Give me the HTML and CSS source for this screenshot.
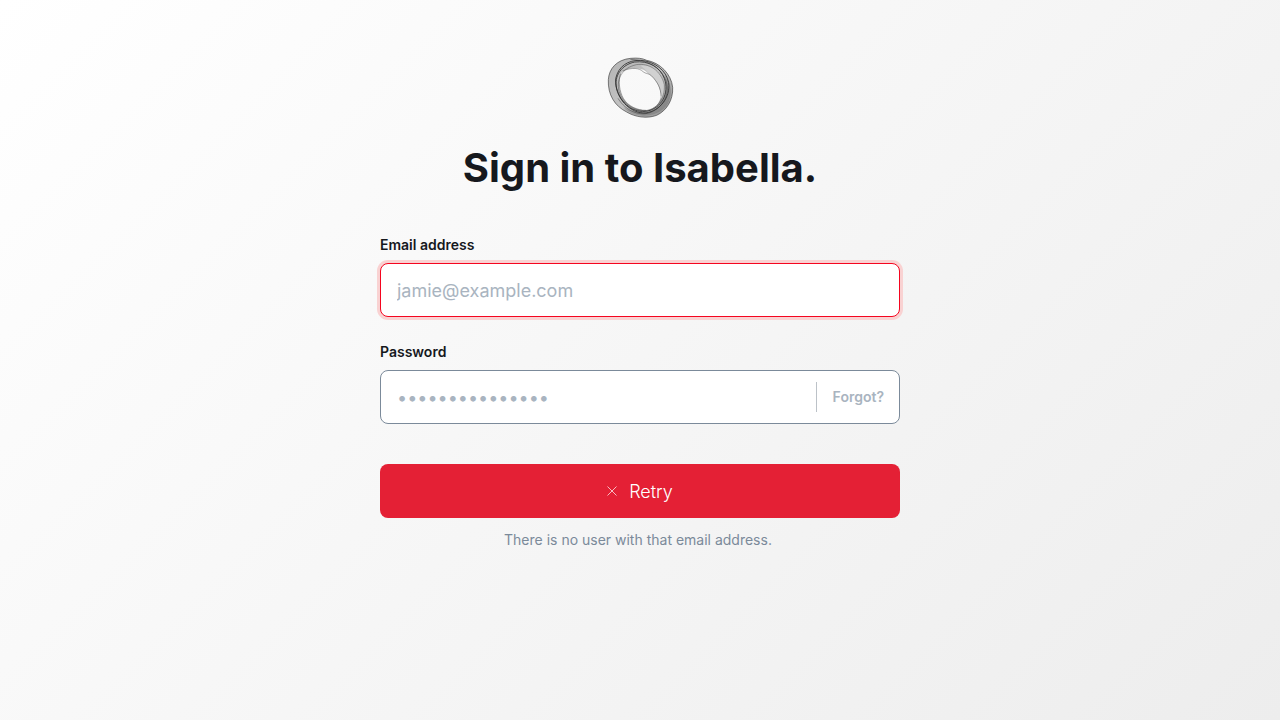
FILE: index.html
```html
<!DOCTYPE html>
<html lang="en">
<head>
<meta charset="utf-8">
<meta name="viewport" content="width=device-width, initial-scale=1">
<title>Sign in to Isabella.</title>
<link rel="stylesheet" href="styles.css">
</head>
<body>
<main class="signin">
  <svg class="logo" viewBox="0 0 240 240" aria-hidden="true">
    <defs>
      <linearGradient id="ring" x1="0" y1="0" x2="1" y2="1">
        <stop offset="0" stop-color="#b4b4b4"/>
        <stop offset="0.5" stop-color="#c2c2c2"/>
        <stop offset="1" stop-color="#8c8c8c"/>
      </linearGradient>
    </defs>
    <path fill="url(#ring)" fill-rule="evenodd" d="M25 95C27 62 50 35 92 31C112 29 128 31 140 37C180 44 214 78 218 118C220 156 200 188 170 202C140 213 105 207 80 192C44 174 23 140 25 95ZM62 77C54 98 58 130 70 151C84 175 112 187 138 187C164 184 180 168 183 142C180 118 170 99 155 84C143 77 137 64 119 62C97 59 75 60 62 77Z"/>
    <path fill="#d4d4d4" fill-opacity="0.85" d="M122 53C159 50 186 73 193 105C197 127 191 146 183 153C184 120 172 98 156 85C146 75 137 64 122 53Z"/>
    <path fill="#555555" fill-opacity="0.3" d="M194 82C211 99 218 130 208 157C199 184 166 205 128 203C100 202 81 192 71 178C94 192 134 198 161 186C190 172 207 127 194 82Z"/>
    <g fill="none" stroke="#303030" stroke-width="3">
      <path d="M25 95C27 62 50 35 92 31C112 29 128 31 140 37C180 44 214 78 218 118C220 156 200 188 170 202C140 213 105 207 80 192C44 174 23 140 25 95Z" stroke-opacity="0.6"/>
      <path d="M47 92C55 55 83 36 122 37C164 40 199 67 206 104C212 148 180 188 138 195C91 198 43 150 47 92Z" stroke-opacity="0.85"/>
      <path d="M50 121C41 84 65 50 104 42C145 37 181 58 193 91C210 137 182 181 143 189C101 197 62 167 50 121Z" stroke-opacity="0.85"/>
      <path d="M57 130C48 90 69 59 109 50C148 44 183 68 193 110C196 152 169 188 131 188C94 187 67 162 57 130Z" stroke-width="2" stroke-opacity="0.6"/>
      <path d="M62 77C54 98 58 130 70 151C84 175 112 187 138 187M68 69C96 57 119 60 129 71C137 78 146 75 155 84C173 103 183 121 183 145" stroke-width="2" stroke-opacity="0.6"/>
      <path d="M91 34C139 37 170 50 190 82C218 127 194 174 155 192C122 207 78 190 54 151" stroke-width="2" stroke-opacity="0.7"/>
    </g>
  </svg>
  <h1 class="title">Sign in to Isabella.</h1>
  <form class="form" novalidate>
    <div class="field">
      <label class="label" for="email">Email address</label>
      <div class="control control-invalid">
        <input class="input" id="email" type="email" placeholder="jamie@example.com" aria-invalid="true" aria-describedby="error">
      </div>
    </div>
    <div class="field">
      <label class="label" for="password">Password</label>
      <div class="control">
        <input class="input" id="password" type="password" placeholder="•••••••••••••••">
        <a class="forgot" href="#">Forgot?</a>
      </div>
    </div>
    <button class="submit" type="submit">
      <svg class="cross" viewBox="0 0 10 10" aria-hidden="true"><path d="M0.5 0.5L9.5 9.5M9.5 0.5L0.5 9.5"/></svg>
      <span>Retry</span>
    </button>
    <p class="error" id="error" role="alert">There is no user with that email address.</p>
  </form>
</main>
</body>
</html>
```
FILE: styles.css
```css
* {
  box-sizing: border-box;
}

body {
  margin: 0;
  min-height: 100vh;
  background: linear-gradient(135deg, #ffffff, #ededed);
  color: #16181d;
  font-family: Inter, "Liberation Sans", sans-serif;
}

.signin {
  display: flex;
  flex-direction: column;
  align-items: center;
  width: 100%;
  max-width: 560px;
  margin: 0 auto;
  padding: 48px 20px;
}

.logo {
  width: 80px;
  height: 80px;
}

.title {
  margin: 12px 0 40px;
  font-size: 40px;
  line-height: 56px;
  font-weight: 700;
  text-align: center;
}

.form {
  display: flex;
  flex-direction: column;
  width: 100%;
}

.field {
  display: flex;
  flex-direction: column;
  gap: 9px;
  margin-bottom: 26px;
}

.label {
  font-size: 14px;
  line-height: 18px;
  font-weight: 600;
}

.control {
  display: flex;
  align-items: center;
  height: 54px;
  border: 1px solid #7b8a9a;
  border-radius: 8px;
  background: #ffffff;
}

.control-invalid {
  border-color: #f5051f;
  box-shadow: 0 0 0 3px #f9d2d2;
}

.input {
  flex: 1;
  min-width: 0;
  height: 100%;
  padding: 0 16px;
  border: 0;
  outline: 0;
  background: transparent;
  color: inherit;
  font: inherit;
  font-size: 18px;
}

.input::placeholder {
  color: #a9b4c0;
  opacity: 1;
}

.forgot {
  padding: 0 15px 0 16px;
  border-left: 1px solid #bcc2c8;
  color: #a9b4c0;
  font-size: 14px;
  line-height: 30px;
  font-weight: 600;
  text-decoration: none;
}

.submit {
  display: flex;
  align-items: center;
  justify-content: center;
  gap: 12px;
  height: 54px;
  margin-top: 14px;
  border: 0;
  border-radius: 8px;
  background: #e42035;
  color: #ffffff;
  font: inherit;
  font-size: 18px;
  font-weight: 300;
}

.cross {
  width: 10px;
  height: 10px;
  fill: none;
  stroke: #ffffff;
  stroke-opacity: 0.7;
}

.error {
  margin: 12px 0 0;
  padding-right: 4px;
  color: #7b8a9a;
  font-size: 14px;
  line-height: 20px;
  text-align: center;
}
```
